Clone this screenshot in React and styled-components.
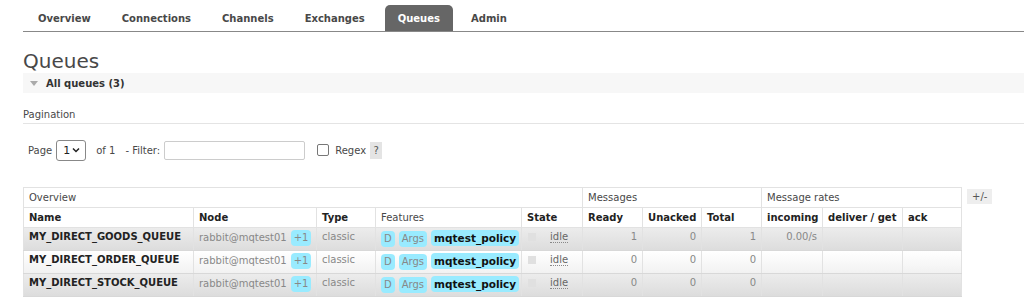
import React from "react";
import styled, { createGlobalStyle } from "styled-components";

const GlobalStyle = createGlobalStyle`
  body {
    margin: 0;
    background: #fff;
    font-family: "DejaVu Sans", Verdana, sans-serif;
    font-size: 10px;
    color: #484848;
  }
`;

const Page = styled.div`
  padding: 0 0 0 23px;
`;

const Tabs = styled.ul`
  display: flex;
  align-items: flex-end;
  height: 31px;
  margin: 0;
  padding: 0;
  list-style: none;
  border-bottom: 1px solid #888;
`;

const Tab = styled.li`
  height: 26px;
  line-height: 27px;
  padding: 0 ${(p) => (p.$active ? "13px" : "15px")};
  margin: 0 ${(p) => (p.$active ? "3px" : "1px")} 0 ${(p) => (p.$active ? "4px" : "0")};
  font-weight: bold;
  font-size: 10px;
  color: ${(p) => (p.$active ? "#fff" : "#484848")};
  background: ${(p) => (p.$active ? "#666" : "transparent")};
  border-radius: 5px 5px 0 0;
`;

const Title = styled.h1`
  margin: 18px 0 0;
  font-size: 20px;
  font-weight: normal;
  line-height: 23px;
  color: #484848;
`;

const SectionBar = styled.div`
  display: flex;
  align-items: center;
  gap: 8px;
  height: 20px;
  padding-left: 7px;
  background: #f7f7f7;
  font-weight: bold;
  color: #333;
`;

const Arrow = styled.span`
  width: 0;
  height: 0;
  border-left: 4px solid transparent;
  border-right: 4px solid transparent;
  border-top: 5px solid #aaa;
`;

const SubHeading = styled.div`
  margin-top: 16px;
  padding-bottom: 2px;
  border-bottom: 1px solid #e4e4e4;
  line-height: 12px;
`;

const FilterRow = styled.div`
  display: flex;
  align-items: center;
  margin: 15px 0 0 5px;
  height: 22px;
`;

const Label = styled.span`
  margin-right: ${(p) => p.$gap || 4}px;
`;

const Select = styled.div`
  display: flex;
  align-items: center;
  justify-content: space-between;
  box-sizing: border-box;
  width: 30px;
  height: 21px;
  padding: 0 5px 0 6px;
  margin-right: 10px;
  border: 1px solid #888;
  border-radius: 3px;
  font-size: 11px;
  color: #222;
`;

const TextInput = styled.div`
  box-sizing: border-box;
  width: 141px;
  height: 19px;
  margin-right: 12px;
  border: 1px solid #ccc;
  border-radius: 2px;
`;

const Checkbox = styled.span`
  box-sizing: border-box;
  width: 12px;
  height: 12px;
  margin-right: 6px;
  border: 1px solid #777;
  border-radius: 2px;
`;

const Help = styled.span`
  display: inline-flex;
  align-items: center;
  justify-content: center;
  width: 12px;
  height: 17px;
  margin-left: 4px;
  background: #e4e4e4;
  color: #555;
`;

const TableArea = styled.div`
  display: flex;
  align-items: flex-start;
  gap: 5px;
  margin-top: 26px;
`;

const Table = styled.table`
  border-collapse: collapse;
  table-layout: fixed;
  width: 939px;
  border: 1px solid #e2e2e2;
`;

const GroupCell = styled.th`
  height: 19px;
  padding: 0 5px;
  text-align: left;
  font-weight: normal;
  border: 1px solid #e2e2e2;
  background: #fff;
`;

const HeadCell = styled.th`
  height: 19px;
  padding: 0 5px;
  text-align: left;
  font-weight: ${(p) => (p.$plain ? "normal" : "bold")};
  color: ${(p) => (p.$plain ? "#484848" : "#222")};
  border: 1px solid #e2e2e2;
  background: #fff;
  white-space: nowrap;
`;

const Row = styled.tr`
  background: ${(p) =>
    p.$alt
      ? "linear-gradient(#fff, #f1f1f1)"
      : "linear-gradient(#ececec, #dcdcdc)"};
`;

const Cell = styled.td`
  height: 20px;
  padding: 2px 5px 0;
  vertical-align: top;
  text-align: ${(p) => (p.$num ? "right" : "left")};
  color: ${(p) => (p.$strong ? "#222" : "#888")};
  font-weight: ${(p) => (p.$strong ? "bold" : "normal")};
  border: 1px solid #e2e2e2;
  border-top: 0;
  border-bottom: 1px solid #d8d8d8;
  white-space: nowrap;
  line-height: 14px;
  overflow: visible;
`;

const Badge = styled.span`
  display: inline-block;
  padding: 1px 3px;
  margin-left: ${(p) => p.$ml || 0}px;
  background: #99ebff;
  border-radius: 4px;
  line-height: 14px;
  color: ${(p) => (p.$policy ? "#111" : "#888")};
  font-weight: ${(p) => (p.$policy ? "bold" : "normal")};
  font-size: ${(p) => (p.$policy ? "10.5px" : "10px")};
`;

const StateBox = styled.span`
  display: inline-block;
  width: 8px;
  height: 8px;
  margin: 3px 14px 0 1px;
  vertical-align: top;
  background: #e0e0e0;
`;

const Idle = styled.abbr`
  text-decoration: none;
  border-bottom: 1px dotted #888;
  color: #666;
`;

const ToggleButton = styled.span`
  margin-top: 2px;
  padding: 2px 5px;
  background: #eee;
  color: #555;
`;

const queues = [
  { name: "MY_DIRECT_GOODS_QUEUE", ready: 1, unacked: 0, total: 1, incoming: "0.00/s" },
  { name: "MY_DIRECT_ORDER_QUEUE", ready: 0, unacked: 0, total: 0, incoming: "" },
  { name: "MY_DIRECT_STOCK_QUEUE", ready: 0, unacked: 0, total: 0, incoming: "" },
];

const widths = [170, 123, 59, 146, 61, 60, 59, 60, 61, 80, 59];

export default function App() {
  return (
    <Page>
      <GlobalStyle />
      <Tabs>
        <Tab>Overview</Tab>
        <Tab>Connections</Tab>
        <Tab>Channels</Tab>
        <Tab>Exchanges</Tab>
        <Tab $active>Queues</Tab>
        <Tab>Admin</Tab>
      </Tabs>
      <Title>Queues</Title>
      <SectionBar>
        <Arrow />
        All queues (3)
      </SectionBar>
      <SubHeading>Pagination</SubHeading>
      <FilterRow>
        <Label>Page</Label>
        <Select>
          1
          <svg width="8" height="6" viewBox="0 0 8 6">
            <path d="M1 1.5 L4 4.5 L7 1.5" fill="none" stroke="#222" strokeWidth="1.5" />
          </svg>
        </Select>
        <Label $gap={10}>of 1</Label>
        <Label>- Filter:</Label>
        <TextInput />
        <Checkbox />
        <span>Regex</span>
        <Help>?</Help>
      </FilterRow>
      <TableArea>
        <Table>
          <colgroup>
            {widths.map((w, i) => (
              <col key={i} style={{ width: w }} />
            ))}
          </colgroup>
          <thead>
            <tr>
              <GroupCell colSpan={5}>Overview</GroupCell>
              <GroupCell colSpan={3}>Messages</GroupCell>
              <GroupCell colSpan={3}>Message rates</GroupCell>
            </tr>
            <tr>
              <HeadCell>Name</HeadCell>
              <HeadCell>Node</HeadCell>
              <HeadCell>Type</HeadCell>
              <HeadCell $plain>Features</HeadCell>
              <HeadCell>State</HeadCell>
              <HeadCell>Ready</HeadCell>
              <HeadCell>Unacked</HeadCell>
              <HeadCell>Total</HeadCell>
              <HeadCell>incoming</HeadCell>
              <HeadCell>deliver / get</HeadCell>
              <HeadCell>ack</HeadCell>
            </tr>
          </thead>
          <tbody>
            {queues.map((q, i) => (
              <Row key={q.name} $alt={i % 2 === 1}>
                <Cell $strong>{q.name}</Cell>
                <Cell>
                  rabbit@mqtest01<Badge $ml={4}>+1</Badge>
                </Cell>
                <Cell>classic</Cell>
                <Cell>
                  <Badge>D</Badge>
                  <Badge $ml={4}>Args</Badge>
                  <Badge $ml={4} $policy>
                    mqtest_policy
                  </Badge>
                </Cell>
                <Cell>
                  <StateBox />
                  <Idle title="idle">idle</Idle>
                </Cell>
                <Cell $num>{q.ready}</Cell>
                <Cell $num>{q.unacked}</Cell>
                <Cell $num>{q.total}</Cell>
                <Cell $num>{q.incoming}</Cell>
                <Cell />
                <Cell />
              </Row>
            ))}
          </tbody>
        </Table>
        <ToggleButton>+/-</ToggleButton>
      </TableArea>
    </Page>
  );
}
